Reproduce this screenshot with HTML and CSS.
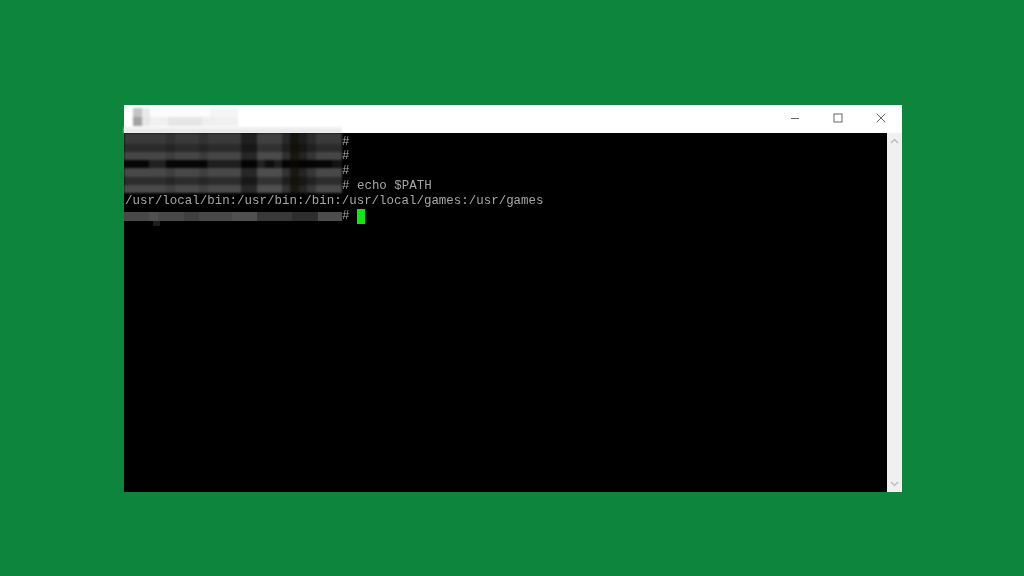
FILE: index.html
```html
<!DOCTYPE html>
<html lang="en">
<head>
<meta charset="utf-8">
<title>Terminal</title>
<link rel="stylesheet" href="styles.css">
</head>
<body>
<main class="window">
  <header class="titlebar">
    <svg class="title-mask" width="218" height="28" viewBox="0 0 218 28" aria-hidden="true">
      <rect x="9" y="3" width="9" height="9" fill="#c4c4c4"/>
      <rect x="18" y="3" width="8" height="9" fill="#e9e9e9"/>
      <rect x="9" y="12" width="9" height="9" fill="#a2a2a2"/>
      <rect x="18" y="12" width="8" height="9" fill="#e6e6e6"/>
      <rect x="26" y="12" width="88" height="9" fill="#f0f0f0"/>
      <rect x="44" y="12" width="34" height="9" fill="#e6e6e6"/>
      <rect x="78" y="12" width="12" height="9" fill="#efefef"/>
      <rect x="26" y="3" width="60" height="9" fill="#fcfcfc"/>
      <rect x="86" y="3" width="28" height="9" fill="#f5f5f5"/>
      <rect x="0" y="22" width="218" height="6" fill="#f0f0f0"/>
      <rect x="0" y="25" width="218" height="3" fill="#e6e6e6"/>
    </svg>
    <div class="controls">
      <span class="control"><svg width="10" height="10" viewBox="0 0 10 10"><path d="M1 5.5H9" class="glyph"/></svg></span>
      <span class="control"><svg width="10" height="10" viewBox="0 0 10 10"><rect x="1" y="1" width="8" height="8" class="glyph"/></svg></span>
      <span class="control"><svg width="10" height="10" viewBox="0 0 10 10"><path d="M.7 .7L9.3 9.3M9.3 .7L.7 9.3" class="glyph"/></svg></span>
    </div>
  </header>
  <section class="terminal">
    <div class="screen">
      <svg class="mosaic" width="218" height="60" viewBox="0 0 218 60" aria-hidden="true">
        <rect width="218" height="11" fill="#3a3a3a"/>
        <rect y="11" width="218" height="8" fill="#2b2b2b"/>
        <rect y="19" width="218" height="8" fill="#464646"/>
        <rect y="27" width="218" height="8" fill="#060606"/>
        <rect y="35" width="218" height="9" fill="#484848"/>
        <rect y="44" width="218" height="8" fill="#2c2c2c"/>
        <rect y="52" width="218" height="8" fill="#4a4a4a"/>
        <rect x="25" y="27" width="17" height="8" fill="#202020"/>
        <rect x="83" y="27" width="34" height="8" fill="#1e1e1e"/>
        <rect x="133" y="27" width="8" height="8" fill="#1a1a1a"/>
        <rect x="150" y="27" width="8" height="8" fill="#161616"/>
        <rect x="208" y="27" width="10" height="8" fill="#121212"/>
        <rect x="42" y="0" width="9" height="60" fill="#000" opacity=".12"/>
        <rect x="75" y="0" width="9" height="60" fill="#000" opacity=".12"/>
        <rect x="117" y="0" width="16" height="60" fill="#000" opacity=".45"/>
        <rect x="158" y="0" width="8" height="60" fill="#000" opacity=".3"/>
        <rect x="166" y="0" width="9" height="60" fill="#0a0800" opacity=".75"/>
        <rect x="175" y="0" width="8" height="60" fill="#000" opacity=".5"/>
        <rect x="183" y="0" width="9" height="60" fill="#000" opacity=".25"/>
        <rect x="133" y="0" width="25" height="60" fill="#fff" opacity=".03"/>
      </svg>
      <div class="output">
        <div class="line"><span class="prompt"></span>#</div>
        <div class="line"><span class="prompt"></span>#</div>
        <div class="line"><span class="prompt"></span>#</div>
        <div class="line"><span class="prompt"></span># echo $PATH</div>
        <div class="line">/usr/local/bin:/usr/bin:/bin:/usr/local/games:/usr/games</div>
        <div class="line"><span class="prompt last-prompt"><svg class="last-mask" width="218" height="15" viewBox="0 0 218 15" aria-hidden="true">
            <rect y="0" width="218" height="9" fill="#484848"/>
            <rect x="25" y="0" width="9" height="9" fill="#505050"/>
            <rect x="60" y="0" width="15" height="9" fill="#404040"/>
            <rect x="108" y="0" width="25" height="9" fill="#505050"/>
            <rect x="133" y="0" width="35" height="9" fill="#383838"/>
            <rect x="168" y="0" width="26" height="9" fill="#2e2e2e"/>
            <rect x="194" y="0" width="24" height="9" fill="#4c4c4c"/>
            <rect x="29" y="9" width="7" height="5" fill="#1e1e1e"/>
          </svg></span># <span class="cursor"></span></div>
      </div>
    </div>
    <aside class="scrollbar">
      <svg width="15" height="15" viewBox="0 0 15 15"><path d="M4 9L7.5 5.5L11 9" class="chevron"/></svg>
      <svg width="15" height="15" viewBox="0 0 15 15"><path d="M4 6L7.5 9.5L11 6" class="chevron"/></svg>
    </aside>
  </section>
</main>
</body>
</html>
```

FILE: styles.css
```css
html, body {
  margin: 0;
  height: 100%;
}

body {
  background: #0e853c;
  overflow: hidden;
  padding: 105px 0 0 124px;
  box-sizing: border-box;
}

.window {
  width: 778px;
  height: 387px;
  display: flex;
  flex-direction: column;
  background: #fff;
}

.titlebar {
  height: 28px;
  display: flex;
  justify-content: space-between;
  background: #fff;
  flex: none;
}

.title-mask {
  filter: blur(1px);
}

.controls {
  display: flex;
}

.control {
  width: 43px;
  height: 26px;
  display: flex;
  align-items: center;
  justify-content: center;
}

.glyph {
  fill: none;
  stroke: #666;
  stroke-width: 1;
}

.terminal {
  flex: 1;
  display: flex;
  min-height: 0;
}

.screen {
  flex: 1;
  position: relative;
  background: #000;
  overflow: hidden;
}

.mosaic {
  position: absolute;
  top: 0;
  left: 0;
  filter: blur(1px);
}

.output {
  padding: 1.5px 0 0 1px;
  font: 12.46px/14.9px "Liberation Mono", monospace;
  color: #a6a6a6;
  filter: blur(.4px);
}

.line {
  height: 14.9px;
  white-space: pre;
}

.prompt {
  display: inline-block;
  width: 217px;
  height: 14.9px;
  vertical-align: top;
}

.last-prompt {
  position: relative;
}

.last-mask {
  position: absolute;
  top: 3px;
  left: -1px;
  filter: blur(.7px);
}

.cursor {
  display: inline-block;
  width: 8px;
  height: 15px;
  vertical-align: top;
  background: #0de80d;
}

.scrollbar {
  width: 15px;
  flex: none;
  display: flex;
  flex-direction: column;
  justify-content: space-between;
  padding: 1px 0;
  background: #f0f0f0;
}

.chevron {
  fill: none;
  stroke: #bdbdbd;
  stroke-width: 1.5;
}
```
